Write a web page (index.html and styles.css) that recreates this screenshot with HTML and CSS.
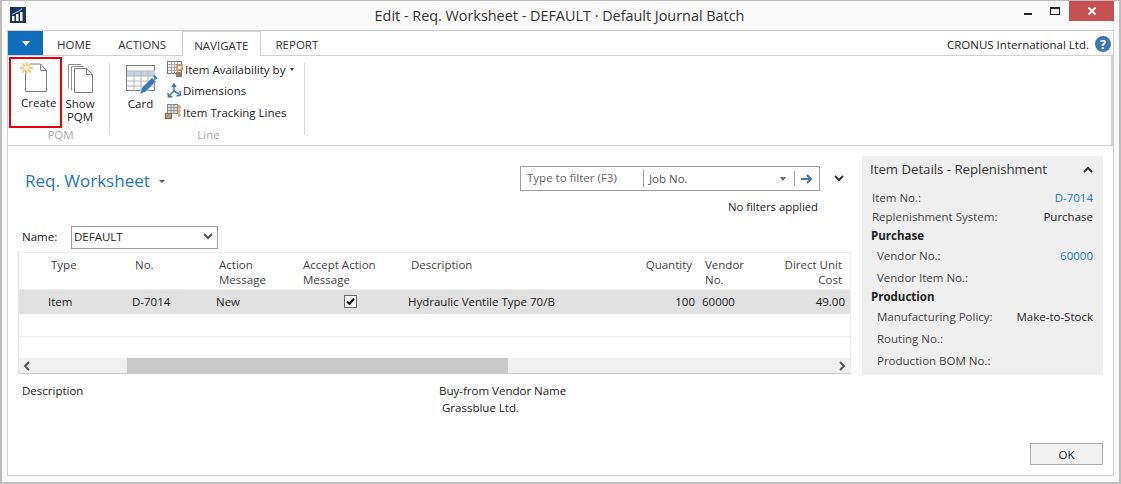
FILE: index.html
```html
<!DOCTYPE html>
<html lang="en">
<head>
<meta charset="utf-8">
<title>Edit - Req. Worksheet</title>
<link rel="stylesheet" href="styles.css">
</head>
<body>
<div class="window">
  <header class="titlebar">
    <svg class="logo" viewBox="0 0 16 16"><rect width="16" height="16" fill="#17375e"/><path d="M2 14V9h2.500v5zM6 14V7h2.500v7zM10 14V5h2.500v9z" fill="#fff"/><path d="M2 7.500 9 4l3-2.500" stroke="#7fb2e5" stroke-width="1.200" fill="none"/></svg>
    <div class="title">Edit - Req. Worksheet - DEFAULT · Default Journal Batch</div>
    <div class="controls">
      <span class="ctl-min"></span>
      <span class="ctl-max"></span>
      <span class="ctl-close"><svg width="10" height="10" viewBox="0 0 10 10"><path d="M1.500 1.500l7 7M8.500 1.500l-7 7" stroke="#fff" stroke-width="2"/></svg></span>
    </div>
  </header>
  <div class="shell">
    <nav class="tabs">
      <div class="app-btn"><span class="app-arrow"></span></div>
      <span class="tab t1">HOME</span>
      <span class="tab t2">ACTIONS</span>
      <span class="tab active">NAVIGATE</span>
      <span class="tab t4">REPORT</span>
      <span class="company">CRONUS International Ltd.</span>
      <span class="help">?</span>
    </nav>
    <section class="ribbon">
      <div class="group g-pqm">
        <div class="group-items">
          <div class="big create">
            <svg class="big-icon" width="27" height="31" viewBox="0 0 27 31"><path d="M5.500 7.500V29.500H26.500V8.500L20.500 2H10" fill="#fff" stroke="#808080"/><path d="M20.500 2V8.500H26.500" fill="none" stroke="#808080"/><g stroke="#f5cd78" stroke-width="2"><path d="M6.500 0v12M0 6h13M2 1.500l9 9M11 1.500l-9 9"/></g><circle cx="6.500" cy="6" r="2.200" fill="#fff"/></svg>
            <span class="big-label">Create</span>
          </div>
          <div class="big show">
            <svg class="big-icon" width="25" height="30" viewBox="0 0 25 30"><path d="M.5 24.500V.5H13M3.500 26.500V2.500H16" fill="none" stroke="#909090"/><path d="M6.500 4.500H18.500L24.500 10.500V28.500H6.500Z" fill="#fff" stroke="#808080"/><path d="M18.500 4.500V10.500H24.500" fill="none" stroke="#808080"/></svg>
            <span class="big-label">Show<br>PQM</span>
          </div>
        </div>
        <div class="group-label">PQM</div>
      </div>
      <div class="group g-line">
        <div class="group-items">
          <div class="big card">
            <svg class="big-icon" width="32" height="30" viewBox="0 0 32 30"><rect x=".5" y=".5" width="28" height="25" fill="#fff" stroke="#808080"/><rect x="1" y="6" width="28" height="5" fill="#c3d5e8"/><path d="M1 6h28M1 11h28M1 16h28M1 21h28M8 6v20M15 6v20M22 6v20" stroke="#b5b5b5" fill="none"/><path d="M14 29l1.500-6L26 12.500l4 4L19.500 27z" fill="#3f78b5" stroke="#fff" stroke-width=".5"/><path d="M27 11.500l1.500-1.500 3 3-1.500 2z" fill="#3f78b5"/></svg>
            <span class="big-label">Card</span>
          </div>
          <div class="small-list">
            <div class="small">
              <svg width="16" height="16" viewBox="0 0 16 16"><rect x=".5" y=".5" width="14" height="12" fill="#fff" stroke="#777"/><path d="M1 3.500h13M1 6.500h13M1 9.500h13M4.500 1v12M7.500 1v12M10.500 1v12" stroke="#aaa"/><rect x="10" y="4" width="5" height="5" fill="#fff" stroke="#d9813a" stroke-width="1.500"/><rect x="9" y="11" width="6" height="5" fill="#9a7a5a"/></svg>
              <span>Item Availability by</span><i class="caret"></i>
            </div>
            <div class="small">
              <svg width="14" height="16" viewBox="0 0 14 16"><path d="M7 8V2M7 8l-5 5M7 8l5 3M5 4l2-3 2 3M1 10l.5 4 4-.5M13 8l.5 4-4 1" fill="none" stroke="#3f78b5" stroke-width="1.500"/></svg>
              <span>Dimensions</span>
            </div>
            <div class="small tight">
              <svg width="17" height="16" viewBox="0 0 17 16"><rect x="2.500" y=".5" width="10" height="9" fill="#ddd" stroke="#888"/><path d="M3 3.500h9M3 6.500h9M6 1v9M9 1v9" stroke="#999"/><path d="M14 1v12M14 3h2M14 7h2M14 11h2" stroke="#d9813a" stroke-width="1.200" fill="none"/><rect x=".5" y="9.500" width="6" height="5" fill="#b89a7a" stroke="#8a6a4a"/></svg>
              <span>Item Tracking Lines</span>
            </div>
          </div>
        </div>
        <div class="group-label">Line</div>
      </div>
    </section>
    <div class="content">
      <main class="left">
        <div class="head">
          <h1 class="page-title">Req. Worksheet<i class="title-caret"></i></h1>
          <div class="filter-col">
            <div class="filter-row">
              <div class="filter">
                <span class="f-type">Type to filter (F3)</span>
                <span class="f-job">Job No.</span>
                <i class="f-caret"></i>
                <span class="f-go"><svg width="12" height="10" viewBox="0 0 12 10"><path d="M0 5h9M6 1l4 4-4 4" fill="none" stroke="#3f78b5" stroke-width="2"/></svg></span>
              </div>
              <svg class="chev" width="10" height="7" viewBox="0 0 10 7"><path d="M1 1l4 4 4-4" fill="none" stroke="#333" stroke-width="2"/></svg>
            </div>
            <div class="no-filters">No filters applied</div>
          </div>
        </div>
        <div class="name-row">
          <label class="name-label">Name:</label>
          <div class="name-select"><span>DEFAULT</span><svg width="10" height="7" viewBox="0 0 10 7"><path d="M1 1l4 4 4-4" fill="none" stroke="#555" stroke-width="2"/></svg></div>
        </div>
        <div class="table">
          <div class="tr th">
            <span></span><span>Type</span><span>No.</span><span>Action<br>Message</span><span>Accept Action<br>Message</span><span>Description</span><span class="r">Quantity</span><span>Vendor<br>No.</span><span class="r">Direct Unit<br>Cost</span>
          </div>
          <div class="tr selected">
            <span></span><span>Item</span><span>D-7014</span><span>New</span><span class="chk"><i class="checkbox"><svg width="9" height="9" viewBox="0 0 9 9"><path d="M1 4.500l2.500 2.500L8 1.500" fill="none" stroke="#111" stroke-width="2"/></svg></i></span><span>Hydraulic Ventile Type 70/B</span><span class="r">100</span><span>60000</span><span class="r">49.00</span>
          </div>
          <div class="tr blank"></div>
          <div class="tr blank last"></div>
          <div class="hscroll">
            <svg width="8" height="10" viewBox="0 0 8 10"><path d="M6 1L2 5l4 4" fill="none" stroke="#555" stroke-width="2"/></svg>
            <div class="track"><div class="thumb"></div></div>
            <svg width="8" height="10" viewBox="0 0 8 10"><path d="M2 1l4 4-4 4" fill="none" stroke="#555" stroke-width="2"/></svg>
          </div>
        </div>
        <div class="details">
          <div class="d-left">Description</div>
          <div class="d-right">Buy-from Vendor Name<div class="d-val">Grassblue Ltd.</div></div>
        </div>
      </main>
      <aside class="side">
        <div class="panel">
          <div class="panel-head"><span>Item Details - Replenishment</span><svg width="10" height="7" viewBox="0 0 10 7"><path d="M1 6l4-4 4 4" fill="none" stroke="#333" stroke-width="2"/></svg></div>
          <div class="f"><span class="k">Item No.:</span><span class="v link">D-7014</span></div>
          <div class="f"><span class="k">Replenishment System:</span><span class="v">Purchase</span></div>
          <div class="sec">Purchase</div>
          <div class="f in"><span class="k">Vendor No.:</span><span class="v link">60000</span></div>
          <div class="f in end"><span class="k">Vendor Item No.:</span></div>
          <div class="sec">Production</div>
          <div class="f in"><span class="k">Manufacturing Policy:</span><span class="v">Make-to-Stock</span></div>
          <div class="f in"><span class="k">Routing No.:</span></div>
          <div class="f in"><span class="k">Production BOM No.:</span></div>
        </div>
        <button class="ok">OK</button>
      </aside>
    </div>
  </div>
</div>
</body>
</html>
```
FILE: styles.css
```css
* { box-sizing: border-box; }
html, body { margin: 0; padding: 0; }
body { font-family: "Open Sans", "Noto Sans", sans-serif; font-size: 11.5px; color: #222; background: #fff; }
.window { width: 1121px; height: 484px; background: #fafafa; border: 1px solid #bdbdbd; border-width: 1px 2px 2px 2px; display: flex; flex-direction: column; }
.titlebar { height: 29px; display: flex; align-items: flex-start; flex: none; }
.logo { width: 16px; height: 16px; margin: 6px 0 0 8px; flex: none; }
.title { flex: 1; text-align: center; font-size: 14.4px; line-height: 18px; margin-top: 6px; padding-left: 69px; color: #333; white-space: nowrap; }
.controls { display: flex; margin-right: 5px; flex: none; }
.ctl-min { width: 8px; height: 2px; background: #222; margin: 12px 18px 0 0; }
.ctl-max { width: 10px; height: 8px; border: 1px solid #222; border-top-width: 2px; margin: 6px 9px 0 0; }
.ctl-close { width: 45px; height: 20px; background: #c75050; display: flex; align-items: center; justify-content: center; }
.shell { flex: 1; margin: 0 5px 6px; border: 1px solid #cfcfcf; background: #fff; display: flex; flex-direction: column; min-height: 0; }
.tabs { height: 25px; flex: none; display: flex; align-items: flex-end; position: relative; border-bottom: 1px solid #d0d0d0; }
.app-btn { width: 35px; height: 24px; background: #106ebe; display: flex; align-items: center; justify-content: center; flex: none; align-self: flex-start; }
.app-arrow { width: 0; height: 0; border: 4px solid transparent; border-top: 5px solid #fff; border-bottom: 0; }
.tab { font-size: 11.5px; line-height: 27px; height: 24px; padding: 0 10px; color: #333; }
.t1 { margin-left: 3px; padding: 0 14px 0 11px; }
.t2 { padding: 0 13px; }
.tab.active { margin-left: 3px; height: 25px; margin-bottom: -1px; background: #fff; border: 1px solid #d0d0d0; border-bottom: 0; padding: 0 11px; line-height: 27px; }
.t4 { padding: 0 0 0 15px; }
.company { margin-left: auto; line-height: 27px; height: 24px; font-size: 11.5px; }
.help { width: 16px; height: 16px; border-radius: 50%; background: #3f76b0; color: #fff; font-weight: 700; font-size: 13px; line-height: 16px; text-align: center; margin: 0 2px 3px 6px; }
.ribbon { height: 90px; flex: none; display: flex; border-bottom: 1px solid #d0d0d0; border-right: 2px solid #d0d0d0; }
.group { display: flex; flex-direction: column; position: relative; }
.group::after { content: ""; position: absolute; right: 0; top: 7px; height: 72px; width: 1px; background: #d8d8d8; }
.g-pqm { width: 102px; padding-left: 1px; }
.g-line { width: 195px; }
.group-items { display: flex; height: 71px; }
.group-label { text-align: center; padding-left: 2px; color: #aaa; line-height: 15px; }
.big { display: flex; flex-direction: column; align-items: center; line-height: 13px; text-align: center; }
.big-icon { flex: none; }
.create { width: 53px; height: 71px; margin-top: 1px; border: 2px solid #e8000b; padding-top: 3px; align-items: flex-start; }
.create .big-icon { margin: 0 0 3px 9px; }
.create .big-label { margin-left: 10px; }
.show { width: 36px; padding-top: 8px; }
.show .big-icon { margin-bottom: 3px; }
.card { width: 47px; margin-left: 7px; padding-top: 9px; }
.card .big-icon { margin-bottom: 2px; margin-left: 2px; }
.small-list { display: flex; flex-direction: column; padding-top: 2.600px; margin-left: 3px; }
.small { display: flex; align-items: center; height: 21.500px; gap: 2px; white-space: nowrap; }
.tight { margin-left: -2px; gap: 1px; }
.caret { width: 0; height: 0; border: 2.500px solid transparent; border-top: 3px solid #333; border-bottom: 0; margin-left: 3px; }
.content { flex: 1; display: flex; min-height: 0; }
.left { width: 843px; padding-left: 11px; flex: none; display: flex; flex-direction: column; }
.head { height: 77px; display: flex; justify-content: space-between; flex: none; }
.page-title { margin: 25px 0 0 6px; font-size: 17px; line-height: 20px; font-weight: 400; color: #2277c8; display: flex; align-items: center; height: 20px; }
.title-caret { width: 0; height: 0; border: 3px solid transparent; border-top: 3px solid #555; border-bottom: 0; margin-left: 9px; }
.filter-col { display: flex; flex-direction: column; align-items: flex-end; padding-top: 20px; }
.filter-row { display: flex; align-items: center; }
.filter { width: 300px; height: 25px; border: 1px solid #a0a0a0; display: flex; align-items: center; color: #666; }
.f-type { width: 123px; padding-left: 6px; border-right: 1px solid #a0a0a0; height: 17px; line-height: 15px; flex: none; }
.f-job { padding-left: 5px; flex: 1; color: #555; }
.f-caret { width: 0; height: 0; border: 3.500px solid transparent; border-top: 4px solid #666; border-bottom: 0; margin-right: 8px; }
.f-go { width: 25px; height: 15px; border-left: 1px solid #a0a0a0; display: flex; align-items: center; justify-content: center; }
.chev { margin: 0 7px 0 14px; }
.no-filters { margin: 8px 33px 0 0; line-height: 16px; font-size: 11.3px; }
.name-row { height: 23px; margin: 3px 0 3px 3px; display: flex; align-items: center; flex: none; }
.name-label { width: 49px; padding-bottom: 2px; }
.name-select { width: 147px; height: 23px; border: 1px solid #a0a0a0; display: flex; align-items: center; justify-content: space-between; padding: 0 4px 2px 2px; }
.table { width: 833px; height: 122px; margin-left: -1px; border-left: 1px solid #e6e6e6; border-top: 1px solid #eee; border-right: 1px solid #eee; border-bottom: 1px solid #d0d0d0; flex: none; display: flex; flex-direction: column; }
.tr { display: grid; grid-template-columns: 29px 84px 84px 84px 108px 190px 100px 80px 70px; width: 100%; flex: none; border-bottom: 1px solid #eee; }
.tr > span { white-space: nowrap; }
.th { height: 37px; padding-top: 4px; line-height: 15px; color: #444; }
.th > span { padding-left: 3px; }
.th > .r { text-align: right; padding-right: 6px; }
.selected { height: 24px; background: #e1e1e1; align-items: center; line-height: 22px; border-bottom-color: #e1e1e1; }
.selected > .r { text-align: right; padding-right: 3px; }
.chk { display: flex; justify-content: flex-end; padding-right: 51px; align-items: center; }
.selected > span:nth-child(8) { padding-left: 4px; }
.th > span:nth-child(8) { padding-left: 7px; }
.checkbox { width: 13px; height: 13px; border: 1px solid #666; background: #fff; display: flex; align-items: center; justify-content: center; }
.blank { height: 23px; }
.last { height: 21px; border-bottom: 0; }
.hscroll { height: 15px; background: #f0f0f0; display: flex; align-items: center; padding: 0 4px; }
.track { flex: 1; height: 15px; padding-left: 96px; }
.thumb { width: 381px; height: 15px; background: #c9c9c9; }
.details { display: flex; padding: 8px 0 0 3px; line-height: 17px; }
.d-left { width: 417px; }
.d-val { padding-left: 3px; }
.side { flex: 1; display: flex; flex-direction: column; align-items: flex-end; padding: 10px 10px 10px 0; justify-content: space-between; }
.panel { width: 241px; height: 219px; background: #efefef; padding: 0 10px; }
.panel-head { height: 26px; margin: 0 0 6px -2px; padding-right: 1px; display: flex; align-items: center; justify-content: space-between; font-size: 13.200px; color: #333; }
.panel-head svg { margin-right: -1px; }
.f { display: flex; justify-content: space-between; height: 19px; line-height: 19px; color: #444; }
.f .v { color: #222; }
.f .v.link { color: #2277c8; }
.in { padding-left: 5px; height: 22px; line-height: 22px; }
.end { height: 20px; }
.sec { font-weight: 700; height: 19px; line-height: 19px; color: #222; margin-left: -1px; }
.ok { width: 73px; height: 22px; background: #f2f2f2; border: 1px solid #acacac; font: inherit; color: #222; padding: 0; }
```
